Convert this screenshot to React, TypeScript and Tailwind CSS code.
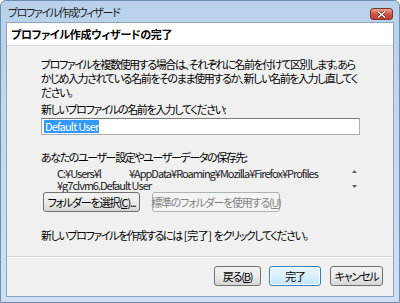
import React from 'react';

const jp = "font-['Noto_Sans_CJK_JP','Liberation_Sans',sans-serif] [font-feature-settings:'palt']";

function WinButton({ label, wide, primary, disabled }: { label: React.ReactNode; wide: string; primary?: boolean; disabled?: boolean }) {
    const base = 'h-[20px] rounded-[3px] border text-[11px] leading-[18px] tracking-[-1.2px] whitespace-nowrap flex items-center justify-center';
    let look = 'border-[#707070] bg-gradient-to-b from-[#f2f2f2] via-[#ebebeb] to-[#d6d6d6] text-black';
    if (primary) look = 'border-[#3c7fb1] bg-gradient-to-b from-[#eaf6fd] via-[#d9f0fc] to-[#bee6fd] text-black shadow-[inset_0_0_0_1px_#ffffff]';
    if (disabled) look = 'border-[#adb2b5] bg-[#f4f4f4] text-[#838383]';
    return <div className={`${base} ${look} ${wide}`}>{label}</div>;
}

export default function App() {
    return (
        <div className={`w-[400px] h-[303px] flex flex-col bg-gradient-to-b from-[#b9d1ea] via-[#c4d9ef] to-[#cfe0f3] border border-[#6d8cae] rounded-t-[6px] ${jp}`}>
            {/* Title bar */}
            <div className="h-[21px] flex justify-between pl-[7px] pr-[6px]">
                <span className="text-[11px] leading-[21px] tracking-[-1.4px] text-[#1e1e1e] pt-[1px]">プロファイル作成ウィザード</span>
                <div className="mt-[7px] w-[23px] h-[12px] rounded-[3px] border border-[#7a3a34] bg-gradient-to-b from-[#e8a493] via-[#d1564a] to-[#c0392b] flex items-center justify-center">
                    <svg width="9" height="7" viewBox="0 0 9 7">
                        <path d="M1 0.5 L8 6.5 M8 0.5 L1 6.5" stroke="#5a1a12" strokeWidth="2.6" />
                        <path d="M1 0.5 L8 6.5 M8 0.5 L1 6.5" stroke="#ffffff" strokeWidth="1.4" />
                    </svg>
                </div>
            </div>

            {/* Client area */}
            <div className="mx-[5px] flex-1 mb-[5px] flex flex-col bg-[#f0f0f0] border border-[#8ea6c2]">
                <div className="h-[23px] bg-white border-b border-[#d5dfe5] pl-[4px] flex items-center">
                    <span className="text-[11px] font-bold text-black leading-[14px] tracking-[-0.3px]">プロファイル作成ウィザードの完了</span>
                </div>

                <div className="flex-1 pl-[34px] pr-[20px] pt-[11px] text-[11px] text-black tracking-[-1.4px]">
                    <div className="leading-[14px] whitespace-nowrap">
                        <div>プロファイルを複数使用する場合は、それぞれに名前を付けて区別します。あら</div>
                        <div>かじめ入力されている名前をそのまま使用するか、新しい名前を入力し直してく</div>
                        <div>ださい。</div>
                    </div>
                    <div className="mt-[3px] leading-[14px] whitespace-nowrap">新しいプロファイルの名前を入力してください:</div>
                    <div className="mt-[2px] w-[319px] h-[17px] bg-white border border-[#abadb3] border-t-[#7a7a7a] flex items-center pl-[2px] tracking-[-0.8px]">
                        <span className="bg-[#3399ff] text-white text-[11px] leading-[13px] px-[1px]">Default User</span>
                    </div>
                    <div className="mt-[15px] leading-[14px] whitespace-nowrap">あなたのユーザー設定やユーザーデータの保存先:</div>
                    <div className="mt-[3px] w-[318px] h-[24px] flex tracking-[-1px]">
                        <div className="flex-1 pl-[16px] text-[11px] leading-[12px] text-[#1a1a1a]">
                            <div className="flex whitespace-nowrap">
                                <span>C:¥Users¥l</span>
                                <span className="w-[28px]" />
                                <span>¥AppData¥Roaming¥Mozilla¥Firefox¥Profiles</span>
                            </div>
                            <div>¥g7clvrn6.Default User</div>
                        </div>
                        <div className="w-[10px] flex flex-col justify-between items-center py-[3px]">
                            <svg width="5" height="3" viewBox="0 0 5 3"><path d="M0 3 L2.5 0 L5 3 Z" fill="#606060" /></svg>
                            <svg width="5" height="3" viewBox="0 0 5 3"><path d="M0 0 L2.5 3 L5 0 Z" fill="#606060" /></svg>
                        </div>
                    </div>
                    <div className="mt-[1px] flex gap-[12px] pl-[2px]">
                        <WinButton wide="w-[97px]" label={<span>フォルダーを選択(<span className="underline">C</span>)...</span>} />
                        <WinButton wide="w-[128px]" disabled label={<span>標準のフォルダーを使用する(<span className="underline">U</span>)</span>} />
                    </div>
                    <div className="mt-[16px] leading-[14px] whitespace-nowrap">
                        新しいプロファイルを作成するには<span className="tracking-[-0.4px]"> [完了] </span>をクリックしてください。
                    </div>
                </div>

                <div className="h-[40px] border-t border-[#d5d5d5] shadow-[inset_0_1px_0_#ffffff] flex justify-end items-start pt-[9px] pr-[10px]">
                    <WinButton wide="w-[47px]" label={<span>戻る(<span className="underline">B</span>)</span>} />
                    <div className="w-[8px]" />
                    <WinButton wide="w-[52px]" primary label="完了" />
                    <div className="w-[9px]" />
                    <WinButton wide="w-[53px]" label="キャンセル" />
                </div>
            </div>
        </div>
    );
}
